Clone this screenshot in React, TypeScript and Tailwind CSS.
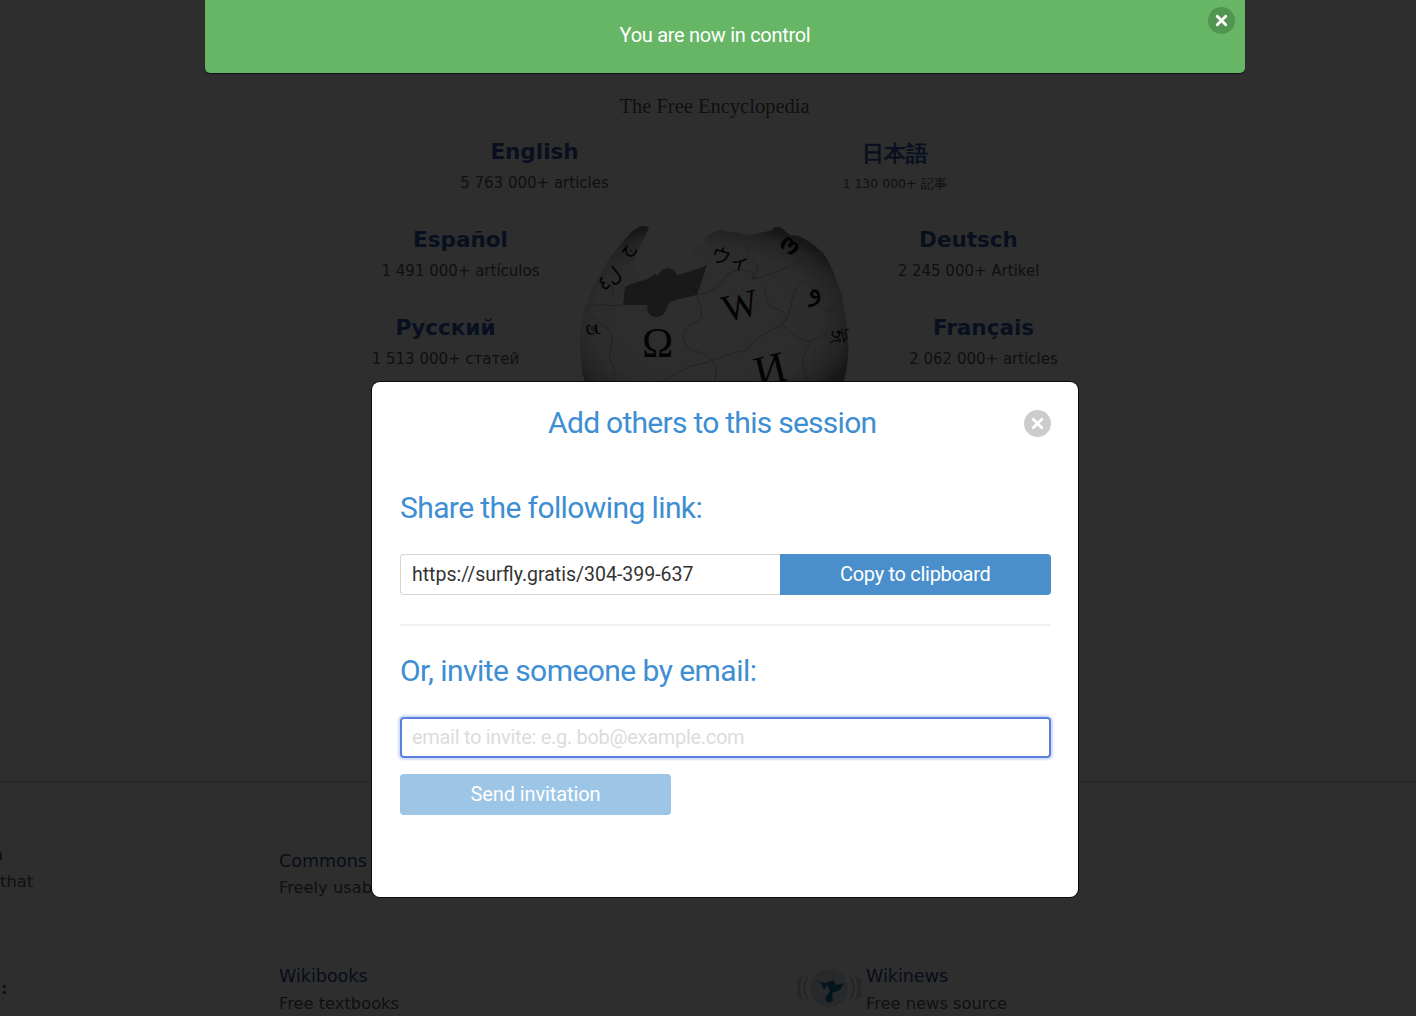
import { X } from 'lucide-react';

const UI_FONT = "font-['Roboto',sans-serif]";
const PAGE_FONT = "font-['DejaVu_Sans',sans-serif]";

function Language({ name, count, cjk }: { name: string; count: string; cjk?: boolean }) {
    return (
        <div className="w-[200px] text-center">
            <div className={cjk ? 'mt-[2px] text-[22px] leading-[28px] font-bold text-[#2f5aae]' : 'text-[21.5px] leading-[28px] font-bold text-[#2f5aae]'}>
                {name}
            </div>
            <div className={cjk ? 'mt-[6px] text-[12.5px] leading-[20px] text-[#54595d]' : 'mt-[7px] text-[15px] leading-[20px] text-[#54595d]'}>
                {count}
            </div>
        </div>
    );
}

function Globe() {
    const sphere =
        'M648 227 C640 224 634 228 622 243 C610 256 604 266 599 277 C592 288 588 298 585 307 C580 325 579 340 580 348 L582 372 L590 400 L838 400 C846 380 850 355 848 338 C846 320 844 306 842 295 C836 278 830 262 823 253 C816 246 808 240 803 238 C796 234 793 236 790 235 C784 230 780 226 777 227 C773 227 772 229 773 230 C764 232 755 234 747 235 C740 233 733 231 727 232 C722 229 712 231 705 237 C704 240 705 242 707 243 C700 246 695 248 690 250 C695 256 703 260 710 265 L697 295 L625 305 L622 290 C630 286 636 282 640 277 C636 272 634 264 635 257 C638 248 645 238 649 228 Z';
    return (
        <svg viewBox="570 215 290 170" className="absolute left-[570px] top-[215px] h-[170px] w-[290px]">
            <defs>
                <radialGradient id="ball" cx="0.47" cy="0.55" r="0.58">
                    <stop offset="0" stopColor="#ffffff" />
                    <stop offset="0.72" stopColor="#f4f4f4" />
                    <stop offset="0.9" stopColor="#c4c4c4" />
                    <stop offset="1" stopColor="#808080" />
                </radialGradient>
            </defs>
            <path d={sphere} fill="url(#ball)" />
            <path
                d="M625 287 C632 283 640 281 648 279 C652 276 656 271 658 277 C658 268 672 264 677 275 C688 272 698 269 707 265 L697 295 C688 297 678 299 670 302 C666 306 668 314 658 317 C650 318 645 311 648 305 L623 305 Z"
                fill="#8a8a8a"
            />
            <g fill="none" stroke="#b4b4b4" strokeWidth="1">
                <path d="M697 295 C712 293 722 285 727 275 C740 266 758 270 752 279 C768 276 785 268 800 262 C808 258 818 252 823 253" />
                <path d="M697 295 C700 308 706 316 696 322 C682 326 680 340 690 350 C700 352 716 356 716 372 C716 380 712 390 710 400" />
                <path d="M623 305 C610 308 598 300 586 310 C590 318 606 325 610 332 C618 345 604 354 612 364 C618 372 612 388 612 400" />
                <path d="M761 285 C770 292 762 305 775 308 C786 312 790 318 782 324 C772 332 752 336 748 350 C730 352 716 362 690 366 C680 372 668 376 660 385" />
                <path d="M782 324 C795 312 788 292 802 282 C815 276 810 306 830 312 C838 302 842 300 842 295" />
                <path d="M782 324 C790 334 806 345 812 340 C828 336 834 326 847 320" />
                <path d="M812 340 C806 352 796 362 808 378 C800 382 796 392 794 400" />
                <path d="M600 282 C610 280 616 290 612 298" />
                <path d="M735 235 C745 244 752 248 746 256 C756 262 762 268 752 279" />
            </g>
            <g fill="#111111" fontFamily="'Liberation Serif', serif">
                <text x="642" y="357" fontSize="42">Ω</text>
                <text x="722" y="318" fontSize="38" transform="rotate(-14 741 305)">W</text>
                <text x="754" y="384" fontSize="44" transform="rotate(-14 770 368)">И</text>
                <text x="711" y="265" fontSize="20" transform="rotate(16 727 257)" fontFamily="'Noto Sans CJK JP', sans-serif">ウィ</text>
                <text x="806" y="298" fontSize="30" transform="rotate(-10 818 285)" fontFamily="'DejaVu Sans', sans-serif">و</text>
                <text x="781" y="254" fontSize="24" fontWeight="700" transform="rotate(40 792 245)" fontFamily="'DejaVu Sans', sans-serif">ო</text>
                <text x="826" y="346" fontSize="22" transform="rotate(80 836 340)" fontFamily="'DejaVu Sans', sans-serif">ঈ</text>
                <text x="598" y="288" fontSize="20" transform="rotate(-38 606 282)" fontFamily="'DejaVu Sans', sans-serif">ل٤</text>
                <text x="618" y="250" fontSize="19" transform="rotate(-55 630 245)" fontFamily="'DejaVu Sans', sans-serif">ج</text>
                <text x="586" y="340" fontSize="22" transform="rotate(85 595 332)" fontFamily="'DejaVu Sans', sans-serif">ಶ</text>
            </g>
        </svg>
    );
}

function WikinewsIcon() {
    return (
        <svg viewBox="0 0 64 40" className="h-[40px] w-[64px]">
            <circle cx="32" cy="20" r="19" fill="#dfe3e6" />
            <path d="M16 13 L24 15 L27 22 L30 17 L33 23 L28 30 L31 35 L36 33 L35 25 L43 22 L47 15 L39 17 L36 12 L29 15 Z" fill="#1a6fa8" />
            <g fill="none" stroke="#a8c4d8" strokeWidth="1.5">
                <path d="M11 9 C6 15 6 25 11 31" />
                <path d="M6 7 C1 14 1 26 6 33" />
                <path d="M2 10 C-1 16 -1 24 2 30" />
                <path d="M53 9 C58 15 58 25 53 31" />
                <path d="M58 7 C63 14 63 26 58 33" />
                <path d="M62 10 C65 16 65 24 62 30" />
            </g>
        </svg>
    );
}

function CloseButton({ className }: { className: string }) {
    return (
        <button className={`flex h-[27px] w-[27px] items-center justify-center rounded-full text-white ${className}`}>
            <X className="h-[17px] w-[17px]" strokeWidth={4} />
        </button>
    );
}

function WikiPage() {
    return (
        <div className={`h-full bg-white ${PAGE_FONT}`}>
            <Globe />
            <div className="h-[781px] pl-[13px] pt-[93px]">
                <div className="text-center font-['Liberation_Serif',serif] text-[20.5px] leading-[26px] text-[#54595d]">
                    The Free Encyclopedia
                </div>
                <div className="mt-[19px] flex justify-center gap-[160px]">
                    <Language name="English" count="5 763 000+ articles" />
                    <Language name="日本語" count="1 130 000+ 記事" cjk />
                </div>
                <div className="mt-[32px] flex justify-center gap-[308px]">
                    <Language name="Español" count="1 491 000+ artículos" />
                    <Language name="Deutsch" count="2 245 000+ Artikel" />
                </div>
                <div className="mt-[33px] flex justify-center gap-[338px]">
                    <Language name="Русский" count="1 513 000+ статей" />
                    <Language name="Français" count="2 062 000+ articles" />
                </div>
            </div>
            <div className="border-t border-[#c8ccd1] pt-[66px] text-[16.3px] text-[#54595d]">
                <div className="flex h-[115px]">
                    <div className="w-[279px]">
                        <div className="-mt-[5px] h-[26px] overflow-hidden text-[#2f5aae]">
                            <span className="-ml-[7px]">a</span>
                        </div>
                        <div className="leading-[26px]">that</div>
                    </div>
                    <div>
                        <div className="text-[17.5px] leading-[26px] text-[#2a4a8a]">Commons</div>
                        <div className="mt-[1px] leading-[26px]">Freely usable photos &amp; more</div>
                    </div>
                </div>
                <div className="flex">
                    <div className="w-[279px]">
                        <div className="-ml-[2px] mr-[76px] h-[60px] border border-[#f0f1f3] pl-[2px] pt-[12px] leading-[26px] font-bold">:</div>
                    </div>
                    <div className="w-[518px]">
                        <div className="text-[17.5px] leading-[26px] text-[#2a4a8a]">Wikibooks</div>
                        <div className="mt-[2px] leading-[26px]">Free textbooks</div>
                    </div>
                    <div className="mr-[6px] w-[63px] pt-[5px]">
                        <WikinewsIcon />
                    </div>
                    <div>
                        <div className="text-[17.5px] leading-[26px] text-[#2a4a8a]">Wikinews</div>
                        <div className="mt-[2px] leading-[26px]">Free news source</div>
                    </div>
                </div>
            </div>
        </div>
    );
}

export default function App() {
    return (
        <div className="relative h-[1016px] w-full overflow-hidden">
            <WikiPage />
            {/* dim layer over the hosted page */}
            <div className="absolute inset-0 bg-black/82" />

            <div className={`absolute left-[205px] top-0 flex h-[73px] w-[1040px] items-center justify-center rounded-b-[5px] bg-[#66b665] pr-[20px] pb-[3px] shadow-[0_1px_1px_#1a0d24] ${UI_FONT}`}>
                <span className="text-[20px] tracking-[-0.3px] text-white">You are now in control</span>
                <CloseButton className="absolute right-[10px] top-[7px] bg-[#529552]" />
            </div>

            <div className={`absolute left-[372px] top-[382px] h-[515px] w-[706px] rounded-[8px] bg-white pl-[28px] pr-[27.5px] pt-[22px] shadow-[0_0_0_1px_#0c0c0c] ${UI_FONT}`}>
                <div className="relative flex h-[36px] items-center">
                    <h2 className="w-full pr-[26px] text-center text-[30px] tracking-[-0.73px] text-[#3d8ed2]">
                        Add others to this session
                    </h2>
                    <CloseButton className="absolute right-0 top-[6px] bg-[#cccccc]" />
                </div>
                <h3 className="mt-[49px] text-[30px] leading-[38px] tracking-[-0.6px] text-[#3d8ed2]">
                    Share the following link:
                </h3>
                <div className="mt-[27px] flex h-[41px]">
                    <div className="flex w-[380px] items-center rounded-l-[4px] border border-r-0 border-[#d5d5d5] pl-[11px] text-[19.5px] text-[#333333]">
                        https://surfly.gratis/304-399-637
                    </div>
                    <button className="flex-1 rounded-r-[4px] bg-[#4a8fcb] pb-[1px] text-[20px] tracking-[-0.3px] text-white">
                        Copy to clipboard
                    </button>
                </div>
                <div className="mt-[29px] h-[2px] bg-[#f0f0f0]" />
                <h3 className="mt-[26px] text-[30px] leading-[38px] tracking-[-0.55px] text-[#3d8ed2]">
                    Or, invite someone by email:
                </h3>
                <div className="mt-[27px] flex h-[41px] items-center rounded-[4px] border-2 border-[#5b7fdf] pb-[1px] pl-[10px] text-[20px] tracking-[-0.3px] text-[#dcdcdc] shadow-[0_0_2px_2px_#d0dcf8]">
                    email to invite: e.g. bob@example.com
                </div>
                <button className="mt-[16px] h-[41px] w-[271px] rounded-[4px] bg-[#9dc5e5] pb-[1px] text-[20px] tracking-[-0.1px] text-white">
                    Send invitation
                </button>
            </div>
        </div>
    );
}
